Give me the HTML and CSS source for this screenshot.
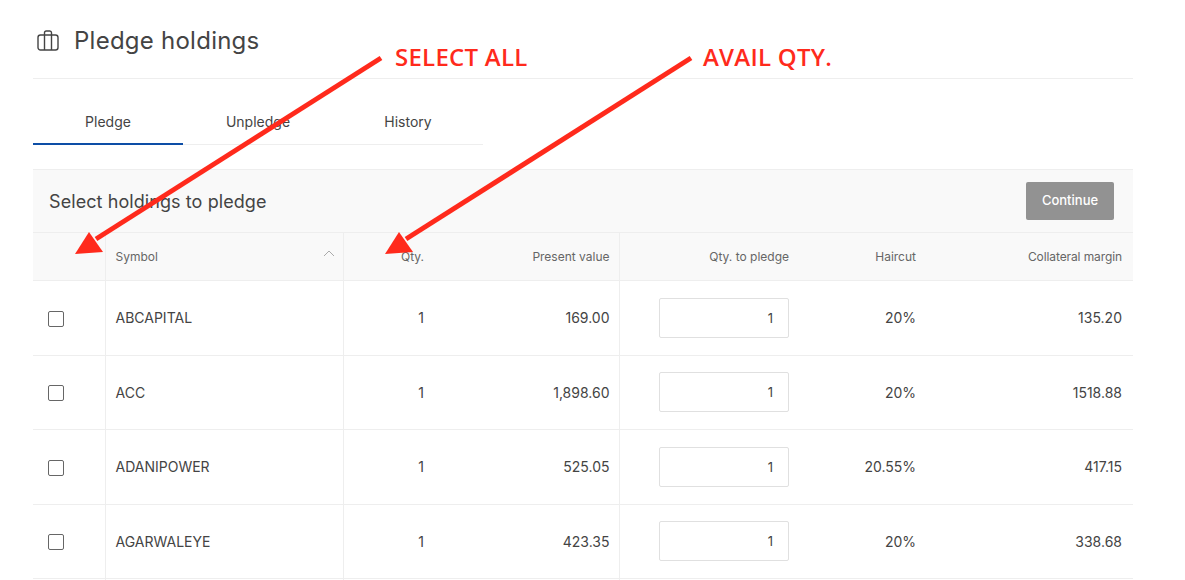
FILE: index.html
```html
<!DOCTYPE html>
<html lang="en">
<head>
<meta charset="utf-8">
<title>Pledge holdings</title>
<link rel="stylesheet" href="styles.css">
</head>
<body>
<main class="page">
  <header class="title-bar">
    <svg class="title-icon" width="22" height="21" viewBox="0 0 22 21" fill="none" stroke="#444" stroke-width="1.4" stroke-linejoin="round">
      <rect x="1" y="5" width="20" height="15" rx="2.5"/>
      <path d="M7.5 5V20M14.5 5V20M7.5 5V2.8C7.5 1.8 8.2 1 9.2 1H12.8C13.8 1 14.5 1.8 14.5 2.8V5"/>
    </svg>
    <h1 class="title">Pledge holdings</h1>
  </header>
  <nav class="tabs">
    <a class="tab tab-active">Pledge</a>
    <a class="tab">Unpledge</a>
    <a class="tab">History</a>
  </nav>
  <section class="toolbar">
    <h2 class="toolbar-title">Select holdings to pledge</h2>
    <button class="continue" type="button">Continue</button>
  </section>
  <table class="holdings">
    <colgroup>
      <col class="c-check"><col class="c-symbol"><col class="c-qty"><col class="c-value"><col class="c-pledge"><col class="c-haircut"><col class="c-margin">
    </colgroup>
    <thead>
      <tr>
        <th class="bordered"></th>
        <th class="left bordered"><span class="sort-head">Symbol<svg class="sort" width="12" height="7" viewBox="0 0 12 7" fill="none" stroke="#aaa" stroke-width="1"><path d="M1 6L6 1L11 6"/></svg></span></th>
        <th>Qty.</th>
        <th class="bordered value">Present value</th>
        <th>Qty. to pledge</th>
        <th>Haircut</th>
        <th class="margin">Collateral margin</th>
      </tr>
    </thead>
    <tbody>
      <tr>
        <td class="bordered check-cell"><span class="check"></span></td>
        <td class="left bordered">ABCAPITAL</td>
        <td>1</td>
        <td class="bordered value">169.00</td>
        <td><span class="qty-input">1</span></td>
        <td>20%</td>
        <td class="margin">135.20</td>
      </tr>
      <tr>
        <td class="bordered check-cell"><span class="check"></span></td>
        <td class="left bordered">ACC</td>
        <td>1</td>
        <td class="bordered value">1,898.60</td>
        <td><span class="qty-input">1</span></td>
        <td>20%</td>
        <td class="margin">1518.88</td>
      </tr>
      <tr>
        <td class="bordered check-cell"><span class="check"></span></td>
        <td class="left bordered">ADANIPOWER</td>
        <td>1</td>
        <td class="bordered value">525.05</td>
        <td><span class="qty-input">1</span></td>
        <td>20.55%</td>
        <td class="margin">417.15</td>
      </tr>
      <tr>
        <td class="bordered check-cell"><span class="check"></span></td>
        <td class="left bordered">AGARWALEYE</td>
        <td>1</td>
        <td class="bordered value">423.35</td>
        <td><span class="qty-input">1</span></td>
        <td>20%</td>
        <td class="margin">338.68</td>
      </tr>
      <tr>
        <td class="bordered"></td><td class="bordered"></td><td></td><td class="bordered"></td><td></td><td></td><td></td>
      </tr>
    </tbody>
  </table>
</main>
<svg class="arrows" width="1185" height="580" viewBox="0 0 1185 580">
  <path class="arrow-line" d="M381 58L96 239"/>
  <path class="arrow-head" d="M75 254L89 232L103 252Z"/>
  <path class="arrow-line" d="M691 58L406 239"/>
  <path class="arrow-head" d="M385 254L399 232L413 252Z"/>
</svg>
<div class="note note-select">SELECT ALL</div>
<div class="note note-avail">AVAIL QTY.</div>
</body>
</html>
```
FILE: styles.css
```css
html, body {
  margin: 0;
  height: 580px;
  overflow: hidden;
  background: #fff;
}
body {
  position: relative;
  font-family: Inter, "Liberation Sans", sans-serif;
  color: #444;
}
.page {
  width: 1100px;
  height: 580px;
  margin-left: 33px;
  overflow: hidden;
}
.title-bar {
  display: flex;
  align-items: center;
  gap: 15px;
  height: 79px;
  padding: 3px 0 0 4px;
  box-sizing: border-box;
  border-bottom: 1px solid #eee;
}
.title-icon {
  flex: none;
}
.title {
  margin: 0;
  font-size: 24px;
  letter-spacing: 0.25px;
  font-weight: 400;
  color: #444;
  line-height: 32px;
}
.tabs {
  display: flex;
  width: 450px;
  height: 65px;
  margin-bottom: 24px;
  border-bottom: 1px solid #eee;
}
.tab {
  flex: 1;
  display: flex;
  justify-content: center;
  align-items: flex-start;
  padding-top: 34px;
  font-size: 14px;
  color: #444;
}
.tab-active {
  border-bottom: 2px solid #0d4ea6;
  margin-bottom: -1px;
}
.toolbar {
  display: flex;
  justify-content: space-between;
  align-items: center;
  height: 64px;
  padding: 0 19px 0 16px;
  box-sizing: border-box;
  background: #f9f9f9;
  border-top: 1px solid #eee;
  border-bottom: 1px solid #eee;
}
.toolbar-title {
  margin: 0;
  font-size: 18px;
  letter-spacing: 0.08px;
  font-weight: 400;
  color: #444;
}
.continue {
  width: 88px;
  height: 38px;
  padding: 0 0 2px;
  border: 0;
  border-radius: 2px;
  background: #929292;
  color: #fff;
  font: 500 13px Inter, "Liberation Sans", sans-serif;
}
.holdings {
  width: 1100px;
  table-layout: fixed;
  border-collapse: collapse;
}
.c-check { width: 72px; }
.c-symbol { width: 238px; }
.c-qty { width: 91px; }
.c-value { width: 185px; }
.c-pledge { width: 180px; }
.c-haircut { width: 127px; }
.c-margin { width: 207px; }
.holdings th, .holdings td {
  padding: 0 10px;
  text-align: right;
  border-bottom: 1px solid #eee;
}
.holdings th {
  height: 47px;
  background: #f9f9f9;
  font-size: 12px;
  font-weight: 400;
  color: #666;
}
.holdings td {
  height: 73.5px;
  font-size: 14px;
  color: #444;
}
.holdings .left { text-align: left; }
.holdings .value { padding-right: 9px; }
.holdings .margin { padding-right: 11px; }
.holdings th.margin { letter-spacing: -0.1px; }
.holdings .check-cell { text-align: left; padding-left: 15px; }
.holdings .bordered { border-right: 1px solid #eee; }
.sort-head {
  display: flex;
  justify-content: space-between;
  align-items: center;
}
.sort {
  margin: -6px -2px 0 0;
}
.check {
  display: inline-block;
  width: 14px;
  height: 14px;
  vertical-align: middle;
  border: 1px solid #666;
  border-radius: 2px;
  background: #fff;
}
.qty-input {
  display: inline-block;
  width: 130px;
  height: 40px;
  padding-right: 15px;
  box-sizing: border-box;
  border: 1px solid #e0e0e0;
  border-radius: 2px;
  background: #fff;
  font-size: 13px;
  line-height: 38px;
  vertical-align: middle;
}
.arrows {
  position: absolute;
  left: 0;
  top: 0;
  pointer-events: none;
}
.arrow-line {
  fill: none;
  stroke: #ff2a1c;
  stroke-width: 5;
}
.arrow-head {
  fill: #ff2a1c;
}
.note {
  position: absolute;
  top: 41px;
  font-family: "Open Sans", "DejaVu Sans", sans-serif;
  font-size: 24px;
  font-weight: 600;
  letter-spacing: 0.25px;
  line-height: 32px;
  color: #ff2a1c;
  white-space: nowrap;
}
.note-select { left: 395px; }
.note-avail { left: 703px; }
```
